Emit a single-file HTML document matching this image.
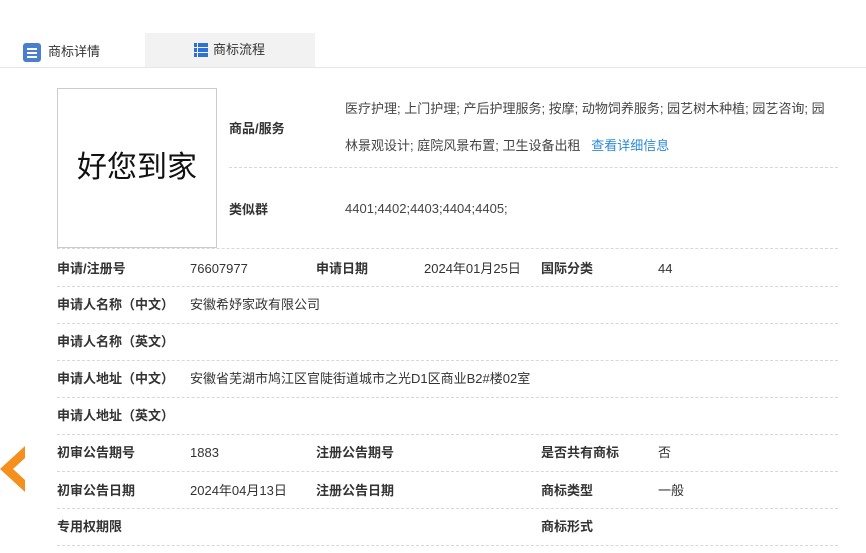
<!DOCTYPE html>
<html><head><meta charset="utf-8"><style>
*{margin:0;padding:0;box-sizing:border-box}
body{width:866px;height:553px;background:#fff;font-family:"Liberation Sans","Noto Sans CJK SC",sans-serif;font-size:13px;color:#333;position:relative;overflow:hidden}
.a{position:absolute;white-space:nowrap;line-height:18px}
.b{font-weight:bold;color:#333}
.line{position:absolute;left:57px;width:781px;border-top:1px dashed #d8d8d8;height:0}
</style></head><body>
<div class="a" style="left:0;top:33px;width:145px;height:35px;background:#fff"></div>
<div class="a" style="left:145px;top:33px;width:170px;height:35px;background:#f2f2f2"></div>
<div class="a" style="left:0;top:67px;width:866px;border-top:1px solid #e6e6e6"></div>
<div class="a" style="left:23px;top:43px;width:18px;height:19px;background:#4a7fd0;border-radius:3px"></div>
<div class="a" style="left:27px;top:48px;width:10px;height:2px;background:#fff;box-shadow:0 4px 0 #fff,0 8px 0 #fff"></div>
<div class="a" style="left:48px;top:43px;font-size:13px;color:#333">商标详情</div>
<div class="a" style="left:194px;top:43px;width:14px;height:14px;background:repeating-linear-gradient(#2f6fd8 0 4px,#f2f2f2 4px 5px)"></div>
<div class="a" style="left:197px;top:43px;width:1px;height:14px;background:#f2f2f2"></div>
<div class="a" style="left:213px;top:41px;color:#333">商标流程</div>

<div class="a" style="left:57px;top:88px;width:160px;height:160px;border:1px solid #ccc"></div>
<div class="a" style="left:57px;top:150px;width:160px;text-align:center;font-size:30px;line-height:36px;color:#111">好您到家</div>

<div class="a b" style="left:229px;top:120px">商品/服务</div>
<div class="a" style="left:345px;top:100px;color:#444">医疗护理; 上门护理; 产后护理服务; 按摩; 动物饲养服务; 园艺树木种植; 园艺咨询; 园</div>
<div class="a" style="left:345px;top:137px;color:#444">林景观设计; 庭院风景布置; 卫生设备出租 &nbsp;&nbsp;<span style="color:#2b8ad8">查看详细信息</span></div>
<div class="a" style="left:229px;top:167px;width:609px;border-top:1px dashed #d8d8d8"></div>
<div class="a b" style="left:229px;top:201px">类似群</div>
<div class="a" style="left:345px;top:200px;color:#444">4401;4402;4403;4404;4405;</div>

<div class="line" style="top:248px"></div>
<div class="line" style="top:286px"></div>
<div class="line" style="top:323px"></div>
<div class="line" style="top:360px"></div>
<div class="line" style="top:397px"></div>
<div class="line" style="top:434px"></div>
<div class="line" style="top:471px"></div>
<div class="line" style="top:508px"></div>
<div class="line" style="top:545px"></div>

<div class="a b" style="left:57px;top:260px">申请/注册号</div>
<div class="a" style="left:190px;top:260px">76607977</div>
<div class="a b" style="left:316px;top:260px">申请日期</div>
<div class="a" style="left:424px;top:260px">2024年01月25日</div>
<div class="a b" style="left:541px;top:260px">国际分类</div>
<div class="a" style="left:658px;top:260px">44</div>

<div class="a b" style="left:57px;top:296px">申请人名称（中文）</div>
<div class="a" style="left:190px;top:296px">安徽希妤家政有限公司</div>
<div class="a b" style="left:57px;top:333px">申请人名称（英文）</div>
<div class="a b" style="left:57px;top:370px">申请人地址（中文）</div>
<div class="a" style="left:190px;top:370px">安徽省芜湖市鸠江区官陡街道城市之光D1区商业B2#楼02室</div>
<div class="a b" style="left:57px;top:407px">申请人地址（英文）</div>

<div class="a b" style="left:57px;top:444px">初审公告期号</div>
<div class="a" style="left:190px;top:444px">1883</div>
<div class="a b" style="left:316px;top:444px">注册公告期号</div>
<div class="a b" style="left:541px;top:444px">是否共有商标</div>
<div class="a" style="left:658px;top:444px">否</div>

<div class="a b" style="left:57px;top:482px">初审公告日期</div>
<div class="a" style="left:190px;top:482px">2024年04月13日</div>
<div class="a b" style="left:316px;top:482px">注册公告日期</div>
<div class="a b" style="left:541px;top:482px">商标类型</div>
<div class="a" style="left:658px;top:482px">一般</div>

<div class="a b" style="left:57px;top:518px">专用权期限</div>
<div class="a b" style="left:541px;top:518px">商标形式</div>

<svg class="a" style="left:0;top:446px" width="28" height="46" viewBox="0 0 28 46"><path d="M25 0 L0 23 L25 46 L25 34 L13 23 L25 12 Z" fill="#f5901e"/></svg>
</body></html>
